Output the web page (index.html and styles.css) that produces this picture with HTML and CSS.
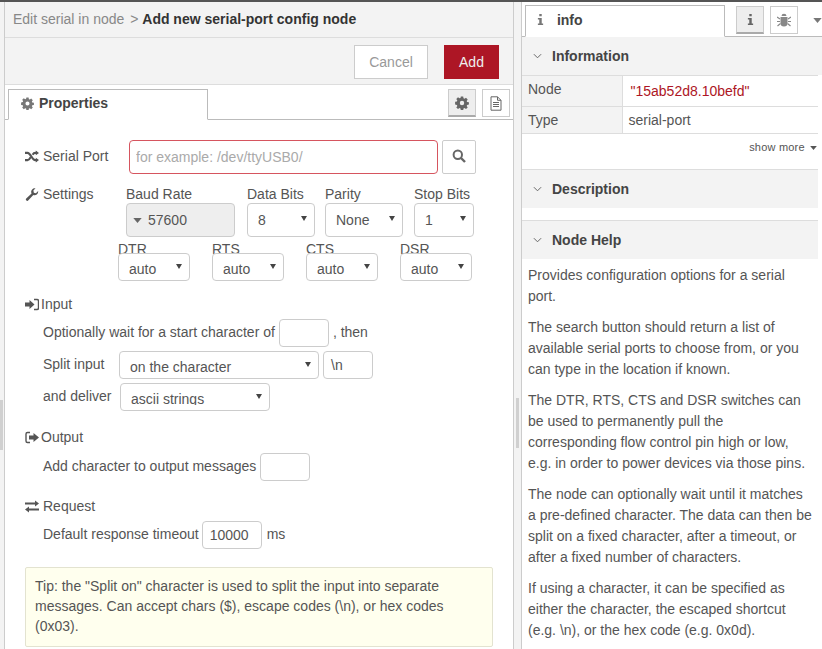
FILE: index.html
```html
<!DOCTYPE html>
<html lang="en">
<head>
  <meta charset="UTF-8" />
  <title>Add new serial-port config node</title>
  <link rel="stylesheet" href="styles.css">
</head>
<body>
  <svg class="defs" width="0" height="0">
    <symbol id="i-cog" viewBox="0 0 14 14"><path fill-rule="evenodd" d="M5.8 0.5h2.4l.3 1.8 1 .4 1.5-1 1.7 1.700-1 1.500.4 1 1.800.3v2.400l-1.800.3-.4 1 1 1.500-1.700 1.700-1.500-1-1 .4-.3 1.800H5.800l-.3-1.800-1-.4-1.500 1-1.700-1.700 1-1.500-.4-1-1.800-.3V5.800l1.800-.3.4-1-1-1.500 1.700-1.700 1.500 1 1-.4zM7 4.800a2.200 2.200 0 1 0 0 4.400 2.200 2.200 0 0 0 0-4.400z"/></symbol>
    <symbol id="i-info" viewBox="0 0 8 14"><path d="M2.600 0.800h2.800v2.600H2.600zM1 5.200h4.400v6.400H7v1.800H1v-1.800h1.600V7H1z"/></symbol>
    <symbol id="i-caret" viewBox="0 0 10 6"><path d="M0 0h10L5 6z"/></symbol>
    <symbol id="i-chev" viewBox="0 0 10 6"><path d="M1 1l4 4 4-4" fill="none" stroke="currentColor" stroke-width="1.100"/></symbol>
  </svg>

  <div class="app">
    <div class="left-edge"><span class="grip grip-left"></span></div>

    <main class="tray">
      <div class="tray-title">
        <span class="crumb">Edit serial in node</span>
        <span class="crumb-sep">&gt;</span>
        <b>Add new serial-port config node</b>
      </div>
      <div class="tray-actions">
        <button class="btn">Cancel</button>
        <button class="btn btn-primary">Add</button>
      </div>
      <div class="tabs">
        <div class="tab">
          <svg class="tab-cog"><use href="#i-cog"/></svg>
          Properties
        </div>
        <div class="tab-buttons">
          <span class="tab-btn active"><svg class="tab-cog big"><use href="#i-cog"/></svg></span>
          <span class="tab-btn">
            <svg class="doc" viewBox="0 0 12 15"><path d="M1 .8h6.500L11 4.300v9.900H1z M7.500 .8v3.500H11 M3 6.500h6 M3 8.500h6 M3 10.500h6" fill="none" stroke="currentColor"/></svg>
          </span>
        </div>
      </div>

      <div class="form">
        <div class="row row-port">
          <label class="label">
            <svg class="ico" viewBox="0 0 14 12"><path d="M0 2.400h2.600c2.800 0 4.600 7.200 7.600 7.200H12M0 9.600h2.600c1.300 0 2.300-1.400 3-2.800M7.600 4.200c.7-1.100 1.500-1.800 2.600-1.800H12" fill="none" stroke="currentColor" stroke-width="2.100"/><path d="M10.800 0l3.200 2.400-3.200 2.400zM10.800 7.200l3.200 2.400-3.200 2.400z"/></svg>
            Serial Port
          </label>
          <input class="field port-input" placeholder="for example: /dev/ttyUSB0/">
          <button class="search-btn">
            <svg viewBox="0 0 14 14" width="14" height="14"><circle cx="5.800" cy="5.800" r="4.200" fill="none" stroke="currentColor" stroke-width="2"/><path d="M9 9l4 4" stroke="currentColor" stroke-width="2.400"/></svg>
          </button>
        </div>

        <div class="row row-settings">
          <label class="label">
            <svg class="ico" viewBox="0 0 14 14"><path d="M13.600 3.300a3.900 3.900 0 0 1-5.200 4.200l-5.300 5.800a1.500 1.500 0 0 1-2.300-2l5.700-5.400A3.900 3.900 0 0 1 10.800.4L8.500 2.800l.5 2.200 2.200.6z"/></svg>
            Settings
          </label>
          <div class="settings">
            <div class="col col-baud">
              <span>Baud Rate</span>
              <div class="baud"><svg class="caret"><use href="#i-caret"/></svg>57600</div>
            </div>
            <div class="col col-bits">
              <span>Data Bits</span>
              <div class="select sel-tall">8</div>
            </div>
            <div class="col col-parity">
              <span>Parity</span>
              <div class="select sel-tall">None</div>
            </div>
            <div class="col col-stop">
              <span>Stop Bits</span>
              <div class="select sel-tall">1</div>
            </div>
          </div>
        </div>

        <div class="flow-row">
          <div class="col-flow"><span>DTR</span><div class="select">auto</div></div>
          <div class="col-flow"><span>RTS</span><div class="select">auto</div></div>
          <div class="col-flow"><span>CTS</span><div class="select">auto</div></div>
          <div class="col-flow"><span>DSR</span><div class="select">auto</div></div>
        </div>

        <div class="section section-input">
          <svg class="ico" viewBox="0 0 14 12"><path d="M0 4h4.500V1.500L9.500 6l-5 4.500V8H0z"/><path d="M9 1h3a1.500 1.500 0 0 1 1.500 1.500v7A1.500 1.500 0 0 1 12 11H9" fill="none" stroke="currentColor" stroke-width="1.400"/></svg>
          Input
        </div>
        <div class="line line-wait">
          <span class="line-text">Optionally wait for a start character of</span>
          <span class="field small"></span>
          <span class="line-text">, then</span>
        </div>
        <div class="line line-split">
          <span class="line-text text-split">Split input</span>
          <div class="select">on the character</div>
          <span class="field small2">\n</span>
        </div>
        <div class="line line-deliver">
          <span class="line-text text-deliver">and deliver</span>
          <div class="select select-deliver"><span class="clip">ascii strings</span></div>
        </div>

        <div class="section section-output">
          <svg class="ico" viewBox="0 0 14 12"><path d="M5 1H2.500A1.500 1.500 0 0 0 1 2.500v7A1.500 1.500 0 0 0 2.500 11H5" fill="none" stroke="currentColor" stroke-width="1.400"/><path d="M4 4h4.500V1.500L14 6l-5.500 4.500V8H4z"/></svg>
          Output
        </div>
        <div class="line line-add">
          <span class="line-text">Add character to output messages</span>
          <span class="field small3"></span>
        </div>

        <div class="section section-request">
          <svg class="ico" viewBox="0 0 14 12"><path d="M0 2h10V0l4 3-4 3V4H0zM14 8H4V6L0 9l4 3v-2h10z"/></svg>
          Request
        </div>
        <div class="line line-timeout">
          <span class="line-text">Default response timeout</span>
          <span class="field timeout">10000</span>
          <span class="line-text">ms</span>
        </div>

        <div class="tip">Tip: the "Split on" character is used to split the input into separate messages. Can accept chars ($), escape codes (\n), or hex codes (0x03).</div>
      </div>
    </main>

    <div class="splitter"><span class="grip"></span></div>

    <aside class="sidebar">
      <div class="side-tabs">
        <div class="side-tab">
          <svg class="side-i"><use href="#i-info"/></svg>
          info
        </div>
        <span class="side-btn active"><svg class="side-i"><use href="#i-info"/></svg></span>
        <span class="side-btn">
          <svg class="bug" viewBox="0 0 14 14"><path d="M4.500 3a2.500 2.200 0 0 1 5 0zM3.500 4h7v6a3.500 3.500 0 0 1-7 0z"/><path d="M0 4l3 2M14 4l-3 2M0 8.500h3M14 8.500h-3M.5 13l3-2.500M13.500 13l-3-2.500" stroke="currentColor" stroke-width="1.200"/></svg>
        </span>
        <svg class="side-menu"><use href="#i-caret"/></svg>
      </div>

      <div class="side-head head-info"><svg class="chev"><use href="#i-chev"/></svg>Information</div>
      <table class="info-table">
        <tr class="row-node"><td>Node</td><td class="node-id">"15ab52d8.10befd"</td></tr>
        <tr><td>Type</td><td>serial-port</td></tr>
      </table>
      <div class="show-more">show more <svg class="more-caret"><use href="#i-caret"/></svg></div>

      <div class="side-head head-desc"><svg class="chev"><use href="#i-chev"/></svg>Description</div>
      <div class="desc-gap"></div>

      <div class="side-head head-help"><svg class="chev"><use href="#i-chev"/></svg>Node Help</div>
      <div class="help">
        <p>Provides configuration options for a serial port.</p>
        <p>The search button should return a list of available serial ports to choose from, or you can type in the location if known.</p>
        <p>The DTR, RTS, CTS and DSR switches can be used to permanently pull the corresponding flow control pin high or low, e.g. in order to power devices via those pins.</p>
        <p>The node can optionally wait until it matches a pre-defined character. The data can then be split on a fixed character, after a timeout, or after a fixed number of characters.</p>
        <p>If using a character, it can be specified as either the character, the escaped shortcut (e.g. \n), or the hex code (e.g. 0x0d).</p>
      </div>
    </aside>
  </div>
</body>
</html>
```

FILE: styles.css
```css
* {
  box-sizing: border-box;
}
html, body {
  margin: 0;
  height: 100%;
  overflow: hidden;
}
body {
  font-family: "Liberation Sans", Arial, sans-serif;
  font-size: 14px;
  color: #555;
  background: #fff;
}
.defs {
  position: absolute;
}
svg {
  fill: currentColor;
}
.app {
  display: flex;
  height: 649px;
  border-top: 2px solid #555;
}

/* left edge + splitter */
.left-edge {
  width: 5px;
  padding-top: 398px;
  background: #f3f3f3;
  border-right: 1px solid #ccc;
}
.splitter {
  width: 9px;
  padding: 396px 0 0 2px;
  background: #f3f3f3;
  border-left: 1px solid #ccc;
  border-right: 1px solid #ccc;
}
.grip {
  display: block;
  width: 3px;
  height: 50px;
  background: #d0d0d0;
}

/* tray */
.tray {
  width: 508px;
  overflow: hidden;
}
.tray-title {
  height: 36px;
  padding: 9px 8px 0;
  background: #f3f3f3;
  border-bottom: 1px solid #ddd;
  color: #333;
  white-space: nowrap;
}
.crumb {
  color: #888;
}
.crumb-sep {
  color: #888;
  margin: 0 0 0 2px;
}
.tray-actions {
  display: flex;
  justify-content: flex-end;
  gap: 16px;
  height: 47px;
  padding: 7px 14px 0 0;
  background: #f3f3f3;
  border-bottom: 1px solid #ddd;
}
.btn {
  width: 74px;
  height: 34px;
  font: 14px "Liberation Sans", Arial, sans-serif;
  color: #999;
  background: #fff;
  border: 1px solid #ccc;
}
.btn-primary {
  width: 55px;
  color: #eee;
  background: #ad1625;
  border-color: #ad1625;
}
.tabs {
  display: flex;
  justify-content: space-between;
  height: 35px;
  padding: 4px 3px 0 3px;
  border-bottom: 1px solid #bbb;
}
.tab {
  width: 200px;
  height: 31px;
  padding: 5px 0 0 12px;
  background: #fff;
  border: 1px solid #bbb;
  border-bottom: 1px solid #fff;
  font-weight: bold;
  color: #444;
}
.tab-cog {
  width: 13px;
  height: 13px;
  color: #777;
  vertical-align: -2px;
  margin-right: 1px;
}
.tab-cog.big {
  width: 14px;
  height: 14px;
  color: #666;
  margin: 0;
}
.tab-buttons {
  display: flex;
  gap: 6px;
}
.tab-btn {
  display: flex;
  align-items: center;
  justify-content: center;
  width: 28px;
  height: 28px;
  background: #fff;
  border: 1px solid #ccc;
}
.tab-btn.active {
  background: #eee;
  border-bottom: 2px solid #aaa;
}
.doc {
  width: 12px;
  height: 15px;
  color: #666;
  fill: none;
}

/* form */
.form {
  padding: 20px 20px 0 20px;
}
.row {
  display: flex;
}
.label {
  display: flex;
  align-items: center;
  gap: 4px;
  width: 104px;
  height: 20px;
}
.ico {
  width: 14px;
  height: 13px;
  flex: none;
  color: #555;
}
.field {
  display: inline-block;
  height: 28px;
  background: #fff;
  border: 1px solid #ccc;
  border-radius: 4px;
  font: 14px "Liberation Sans", Arial, sans-serif;
  color: #555;
}
.port-input {
  width: 309px;
  height: 34px;
  padding: 0 6px;
  border-color: #d6555f;
  outline: none;
}
.port-input::placeholder {
  color: #aaa;
}
.search-btn {
  width: 34px;
  height: 34px;
  margin-left: 4px;
  padding: 0;
  color: #666;
  background: #fff;
  border: 1px solid #ccc;
  border-radius: 2px;
}
.row-port {
  height: 34px;
}
.row-port .label {
  margin-top: 6px;
}
.row-settings {
  margin-top: 10px;
}
.settings {
  display: flex;
}
.col {
  display: flex;
  flex-direction: column;
}
.col span {
  height: 19px;
  line-height: 20px;
}
.col-baud {
  width: 121px;
  margin-left: -3px;
}
.col-bits {
  width: 78px;
}
.col-parity {
  width: 89px;
}
.col-stop {
  width: 60px;
}
.baud {
  display: flex;
  align-items: center;
  width: 109px;
  height: 34px;
  padding-left: 6px;
  background: #eee;
  border: 1px solid #ccc;
  border-radius: 4px;
}
.caret {
  width: 9px;
  height: 5px;
  margin-right: 6px;
  color: #666;
}

/* native-looking select */
.select {
  position: relative;
  height: 28px;
  padding: 5px 0 0 10px;
  background: #fff;
  border: 1px solid #ccc;
  border-radius: 4px;
  line-height: 20px;
  overflow: hidden;
}
.select::after {
  content: "";
  position: absolute;
  top: 10px;
  right: 7px;
  border-left: 3px solid transparent;
  border-right: 3px solid transparent;
  border-top: 5px solid #444;
}
.sel-tall {
  height: 34px;
  padding-top: 6px;
}
.sel-tall::after {
  top: 12px;
}
.col-bits .select {
  width: 68px;
}
.col-parity .select {
  width: 78px;
}
.col-stop .select {
  width: 60px;
}
.flow-row {
  display: flex;
  gap: 22px;
  height: 42px;
  margin: 2px 0 0 93px;
}
.col-flow {
  width: 72px;
}
.col-flow span {
  display: block;
  height: 14px;
  line-height: 20px;
}

.section {
  display: flex;
  align-items: center;
  height: 20px;
}
.section-input {
  gap: 2px;
  margin-top: 13px;
}
.section-output {
  gap: 2px;
  margin-top: 16px;
}
.section-request {
  gap: 4px;
  margin-top: 15px;
}
.line {
  display: flex;
  align-items: center;
  margin-left: 18px;
  height: 28px;
  white-space: nowrap;
}
.line-wait {
  gap: 4px;
  margin-top: 5px;
}
.line-wait .small {
  width: 50px;
}
.line-split {
  margin-top: 4px;
}
.line-text {
  margin-top: -2px;
}
.line-split .select {
  width: 200px;
}
.text-split {
  width: 76px;
}
.text-deliver {
  width: 77px;
}
.small2 {
  width: 50px;
  margin-left: 4px;
  padding: 4px 7px 0;
  line-height: 18px;
}
.line-deliver {
  margin-top: 4px;
}
.select-deliver {
  width: 150px;
}
.clip {
  display: block;
  height: 16px;
  overflow: hidden;
}
.small3 {
  width: 50px;
  margin-left: 4px;
}
.line-add {
  margin-top: 6px;
}
.line-timeout {
  margin-top: 5px;
}
.timeout {
  width: 60px;
  margin: 0 5px 0 3px;
  padding: 5px 7px 0;
}
.tip {
  margin-top: 18px;
  padding: 8px 9px 10px;
  background: #ffe;
  border: 1px solid #e3e3d0;
  border-radius: 2px;
  line-height: 20px;
}

/* sidebar */
.sidebar {
  width: 300px;
  flex: none;
  overflow: hidden;
}
.side-tabs {
  display: flex;
  height: 35px;
  padding-top: 3px;
  border-bottom: 1px solid #bbb;
}
.side-tab {
  width: 200px;
  height: 32px;
  margin-left: 3px;
  padding: 6px 0 0 11px;
  background: #fff;
  border: 1px solid #bbb;
  border-bottom: 1px solid #fff;
  font-weight: bold;
  color: #444;
}
.side-i {
  width: 7px;
  height: 13px;
  margin-right: 9px;
  color: #777;
  vertical-align: -1px;
}
.side-btn {
  display: flex;
  align-items: center;
  justify-content: center;
  width: 28px;
  height: 28px;
  margin-top: 1px;
  background: #fff;
  border: 1px solid #ccc;
}
.side-btn + .side-btn {
  margin-left: 6px;
}
.side-btn.active {
  margin-left: 11px;
  background: #eee;
  border-bottom: 2px solid #aaa;
}
.side-btn .side-i {
  margin: 0;
  color: #666;
}
.bug {
  width: 14px;
  height: 14px;
  color: #888;
}
.side-menu {
  width: 9px;
  height: 5px;
  margin: 13px 0 0 15px;
  color: #777;
}
.side-head {
  display: flex;
  align-items: center;
  width: 296px;
  height: 39px;
  padding-left: 11px;
  background: #f3f3f3;
  font-weight: bold;
  color: #444;
}
.head-info {
  width: 100%;
  height: 38px;
}
.chev {
  width: 9px;
  height: 6px;
  margin-right: 10px;
  color: #666;
  fill: none;
}
.info-table {
  width: 296px;
  border-collapse: collapse;
}
.info-table td {
  border-top: 1px solid #ddd;
  border-bottom: 1px solid #ddd;
  padding: 0 6px;
  height: 27px;
}
.info-table td:first-child {
  width: 100px;
  background: #f3f3f3;
  border-right: 1px solid #ddd;
}
.row-node td {
  height: 31px;
}
.row-node td:first-child {
  padding-bottom: 4px;
}
.node-id {
  color: #ad1625;
  padding-left: 8px !important;
}
.show-more {
  width: 296px;
  height: 35px;
  padding: 7px 1px 0 0;
  font-size: 11px;
  letter-spacing: .2px;
  text-align: right;
}
.more-caret {
  width: 7px;
  height: 4px;
  margin-left: 2px;
  vertical-align: 1px;
}
.head-desc {
  border-top: 1px solid #ddd;
}
.desc-gap {
  height: 12px;
}
.head-help {
  border-top: 1px solid #ddd;
}
.help {
  width: 296px;
  padding: 6px 5px 0 6px;
  line-height: 21px;
}
.help p {
  margin: 0 0 10px;
}
```
